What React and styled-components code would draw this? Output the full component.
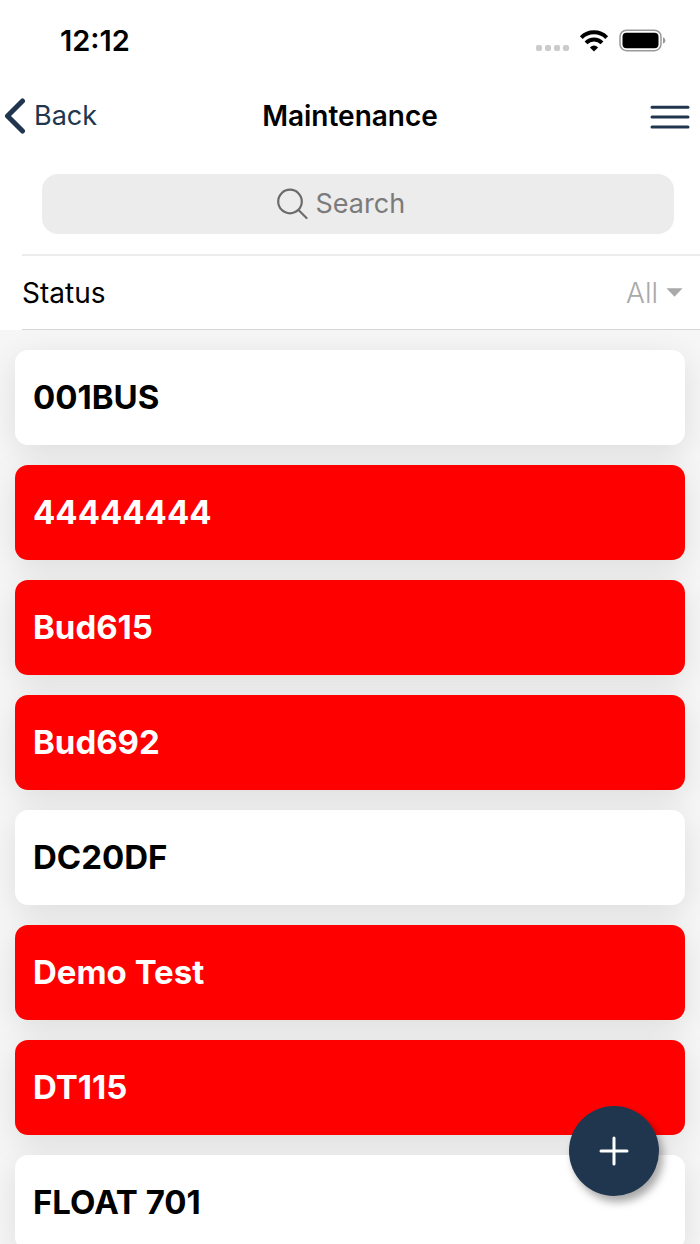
/* Maintenance list screen: status bar, nav header, search, status filter, vehicles */

import React, { useState } from 'react';
import styled, { createGlobalStyle } from 'styled-components';

/*──────── constants ───────*/
const NAVY = '#20364f';
const VEHICLES = [
  { name: '001BUS' },
  { name: '44444444', overdue: true },
  { name: 'Bud615', overdue: true },
  { name: 'Bud692', overdue: true },
  { name: 'DC20DF' },
  { name: 'Demo Test', overdue: true },
  { name: 'DT115', overdue: true },
  { name: 'FLOAT 701' },
];

const GlobalStyle = createGlobalStyle`
  *, *::before, *::after { box-sizing: border-box; }
  body {
    margin: 0; background: #fff; color: #000;
    font-family: Inter, 'Liberation Sans', sans-serif;
  }
  button, input, select { font: inherit; }
`;

/*──────── shell ───────*/
const Screen = styled.div`
  height: 100vh;
  display: flex; flex-direction: column;
  overflow: hidden;
`;

/*──────── status bar ───────*/
const StatusBar = styled.div`
  flex: none; height: 82px; padding: 0 34px 0 60px;
  display: flex; align-items: center; justify-content: space-between;
`;
const Clock = styled.time`font-size: 29px; line-height: 32px; font-weight: 600;`;
const Indicators = styled.div`display: flex; align-items: center; gap: 10px;`;

/*──────── nav header ───────*/
const NavBar = styled.header`
  flex: none; height: 68px; padding: 0 10px;
  display: grid; grid-template-columns: 1fr auto 1fr; align-items: center;
`;
const BackLink = styled.a`
  display: flex; align-items: center; gap: 8px; margin-left: -6px;
  font-size: 27px; line-height: 36px; color: ${NAVY}; text-decoration: none;
`;
const Title = styled.h1`
  margin: 0; font-size: 28px; line-height: 36px; font-weight: 600;
`;
const MenuButton = styled.button`
  justify-self: end; display: flex; padding: 0;
  border: 0; background: none; color: ${NAVY}; cursor: pointer;
`;

/*──────── search ───────*/
const SearchBox = styled.label`
  flex: none; height: 60px; margin: 24px 26px 20px 42px;
  display: flex; align-items: center; justify-content: center; gap: 8px;
  border-radius: 16px; background: #ececec; color: #6b6b6b;
`;
const SearchInput = styled.input`
  width: 124px; padding: 0; border: 0; outline: 0; background: none;
  font-size: 27px; line-height: 36px; color: #000;
  &::placeholder { color: #7b7b7b; opacity: 1; }
`;

/*──────── filter row ───────*/
const FilterRow = styled.div`
  flex: none; height: 76px; margin-left: 22px; padding-right: 17px;
  display: flex; align-items: center; justify-content: space-between;
  border-top: 2px solid #ececec; border-bottom: 1px solid #d6d6d6;
  font-size: 28px; line-height: 36px;
`;
const SelectWrap = styled.div`display: flex; align-items: center; gap: 8px; color: #a9a9a9;`;
const StatusSelect = styled.select`
  appearance: none; field-sizing: content;
  padding: 0; border: 0; outline: 0; background: none;
  color: inherit; font-weight: 300; cursor: pointer;
`;

/*──────── vehicle list ───────*/
const List = styled.ul`
  flex: 1; min-height: 0; margin: 0; padding: 20px 15px; list-style: none;
  display: flex; flex-direction: column; gap: 20px;
  overflow-y: auto; scrollbar-width: none; background: #f6f6f6;
`;
const Card = styled.li`
  flex: none; height: 95px; padding: 0 18px 2px;
  display: flex; align-items: center;
  border-radius: 13px; box-shadow: 0 8px 32px rgba(0, 0, 0, 0.1);
  background: ${({ $overdue }) => ($overdue ? '#f00' : '#fff')};
  color: ${({ $overdue }) => ($overdue ? '#fff' : '#000')};
  font-size: 33px; line-height: 40px; font-weight: 700;
`;

/*──────── floating add ───────*/
const AddButton = styled.button`
  position: fixed; right: 41px; bottom: 48px;
  width: 90px; height: 90px; padding: 0;
  display: grid; place-items: center;
  border: 0; border-radius: 50%; background: ${NAVY}; color: #fff;
  box-shadow: 4px 6px 8px rgba(0, 0, 0, 0.35); cursor: pointer;
`;

/*──────── icons ───────*/
const SignalDots = () => (
  <svg width="34" height="22" viewBox="0 0 34 22" fill="#cbcbcb" aria-hidden>
    {[1, 10, 19, 28].map(x => <rect key={x} x={x} y="15" width="6" height="6" rx="2" />)}
  </svg>
);
const WifiIcon = () => (
  <svg width="30" height="22" viewBox="0 0 30 22" fill="none" stroke="#000" strokeWidth="4" aria-hidden>
    <path d="M2.3 7.6 A18 18 0 0 1 27.7 7.6" />
    <path d="M7 12.9 A11.3 11.3 0 0 1 23 12.9" />
    <path d="M15 21.6 L10.9 17.4 Q15 13.8 19.1 17.4 Z" fill="#000" stroke="none" />
  </svg>
);
const BatteryIcon = () => (
  <svg width="47" height="24" viewBox="0 0 47 24" aria-hidden>
    <rect x="1" y="1.2" width="41" height="20.5" rx="6.5" fill="none" stroke="#999" strokeWidth="1.5" />
    <rect x="3.5" y="3.8" width="36" height="15.4" rx="4" />
    <path d="M44 8.2 Q46.4 9.2 46.4 11.5 Q46.4 13.8 44 14.7 Z" fill="#999" />
  </svg>
);
const ChevronIcon = () => (
  <svg width="22" height="36" viewBox="0 0 22 36" fill="none" stroke="currentColor"
    strokeWidth="5" strokeLinecap="round" strokeLinejoin="round" aria-hidden>
    <path d="M18.5 3 L3.5 18 L18.5 33" />
  </svg>
);
const MenuIcon = () => (
  <svg width="40" height="26" viewBox="0 0 40 26" stroke="currentColor"
    strokeWidth="3" strokeLinecap="round" aria-hidden>
    <path d="M2 4.3H38M2 14.1H38M2 23.9H38" />
  </svg>
);
const SearchIcon = () => (
  <svg width="31" height="32" viewBox="0 0 31 32" fill="none" stroke="currentColor"
    strokeWidth="2.2" strokeLinecap="round" aria-hidden>
    <circle cx="13" cy="13.5" r="11.8" />
    <path d="M21.5 22 L29.5 30" />
  </svg>
);
const CaretIcon = () => (
  <svg width="17" height="9" viewBox="0 0 17 9" fill="currentColor" aria-hidden>
    <path d="M0.5 0.3H16.5L8.5 8.7Z" />
  </svg>
);
const PlusIcon = () => (
  <svg width="30" height="30" viewBox="0 0 30 30" stroke="currentColor"
    strokeWidth="3" strokeLinecap="round" aria-hidden>
    <path d="M15 2V28M2 15H28" />
  </svg>
);

/*──────── component ───────*/
export default function App() {
  const [query, setQuery] = useState('');
  const [status, setStatus] = useState('all');

  const visible = VEHICLES.filter(v =>
    v.name.toLowerCase().includes(query.toLowerCase()));

  return (
    <>
      <GlobalStyle />
      <Screen>
        <StatusBar>
          <Clock>12:12</Clock>
          <Indicators>
            <SignalDots />
            <WifiIcon />
            <BatteryIcon />
          </Indicators>
        </StatusBar>

        <NavBar>
          <BackLink href="#back"><ChevronIcon />Back</BackLink>
          <Title>Maintenance</Title>
          <MenuButton type="button" aria-label="Menu"><MenuIcon /></MenuButton>
        </NavBar>

        <SearchBox>
          <SearchIcon />
          <SearchInput
            type="text"
            aria-label="Search"
            placeholder="Search"
            value={query}
            onChange={e => setQuery(e.target.value)}
          />
        </SearchBox>

        <FilterRow>
          <label htmlFor="status">Status</label>
          <SelectWrap>
            <StatusSelect id="status" value={status} onChange={e => setStatus(e.target.value)}>
              <option value="all">All</option>
            </StatusSelect>
            <CaretIcon />
          </SelectWrap>
        </FilterRow>

        <List>
          {visible.map(v => (
            <Card key={v.name} $overdue={v.overdue}>{v.name}</Card>
          ))}
        </List>

        <AddButton type="button" aria-label="Add"><PlusIcon /></AddButton>
      </Screen>
    </>
  );
}
